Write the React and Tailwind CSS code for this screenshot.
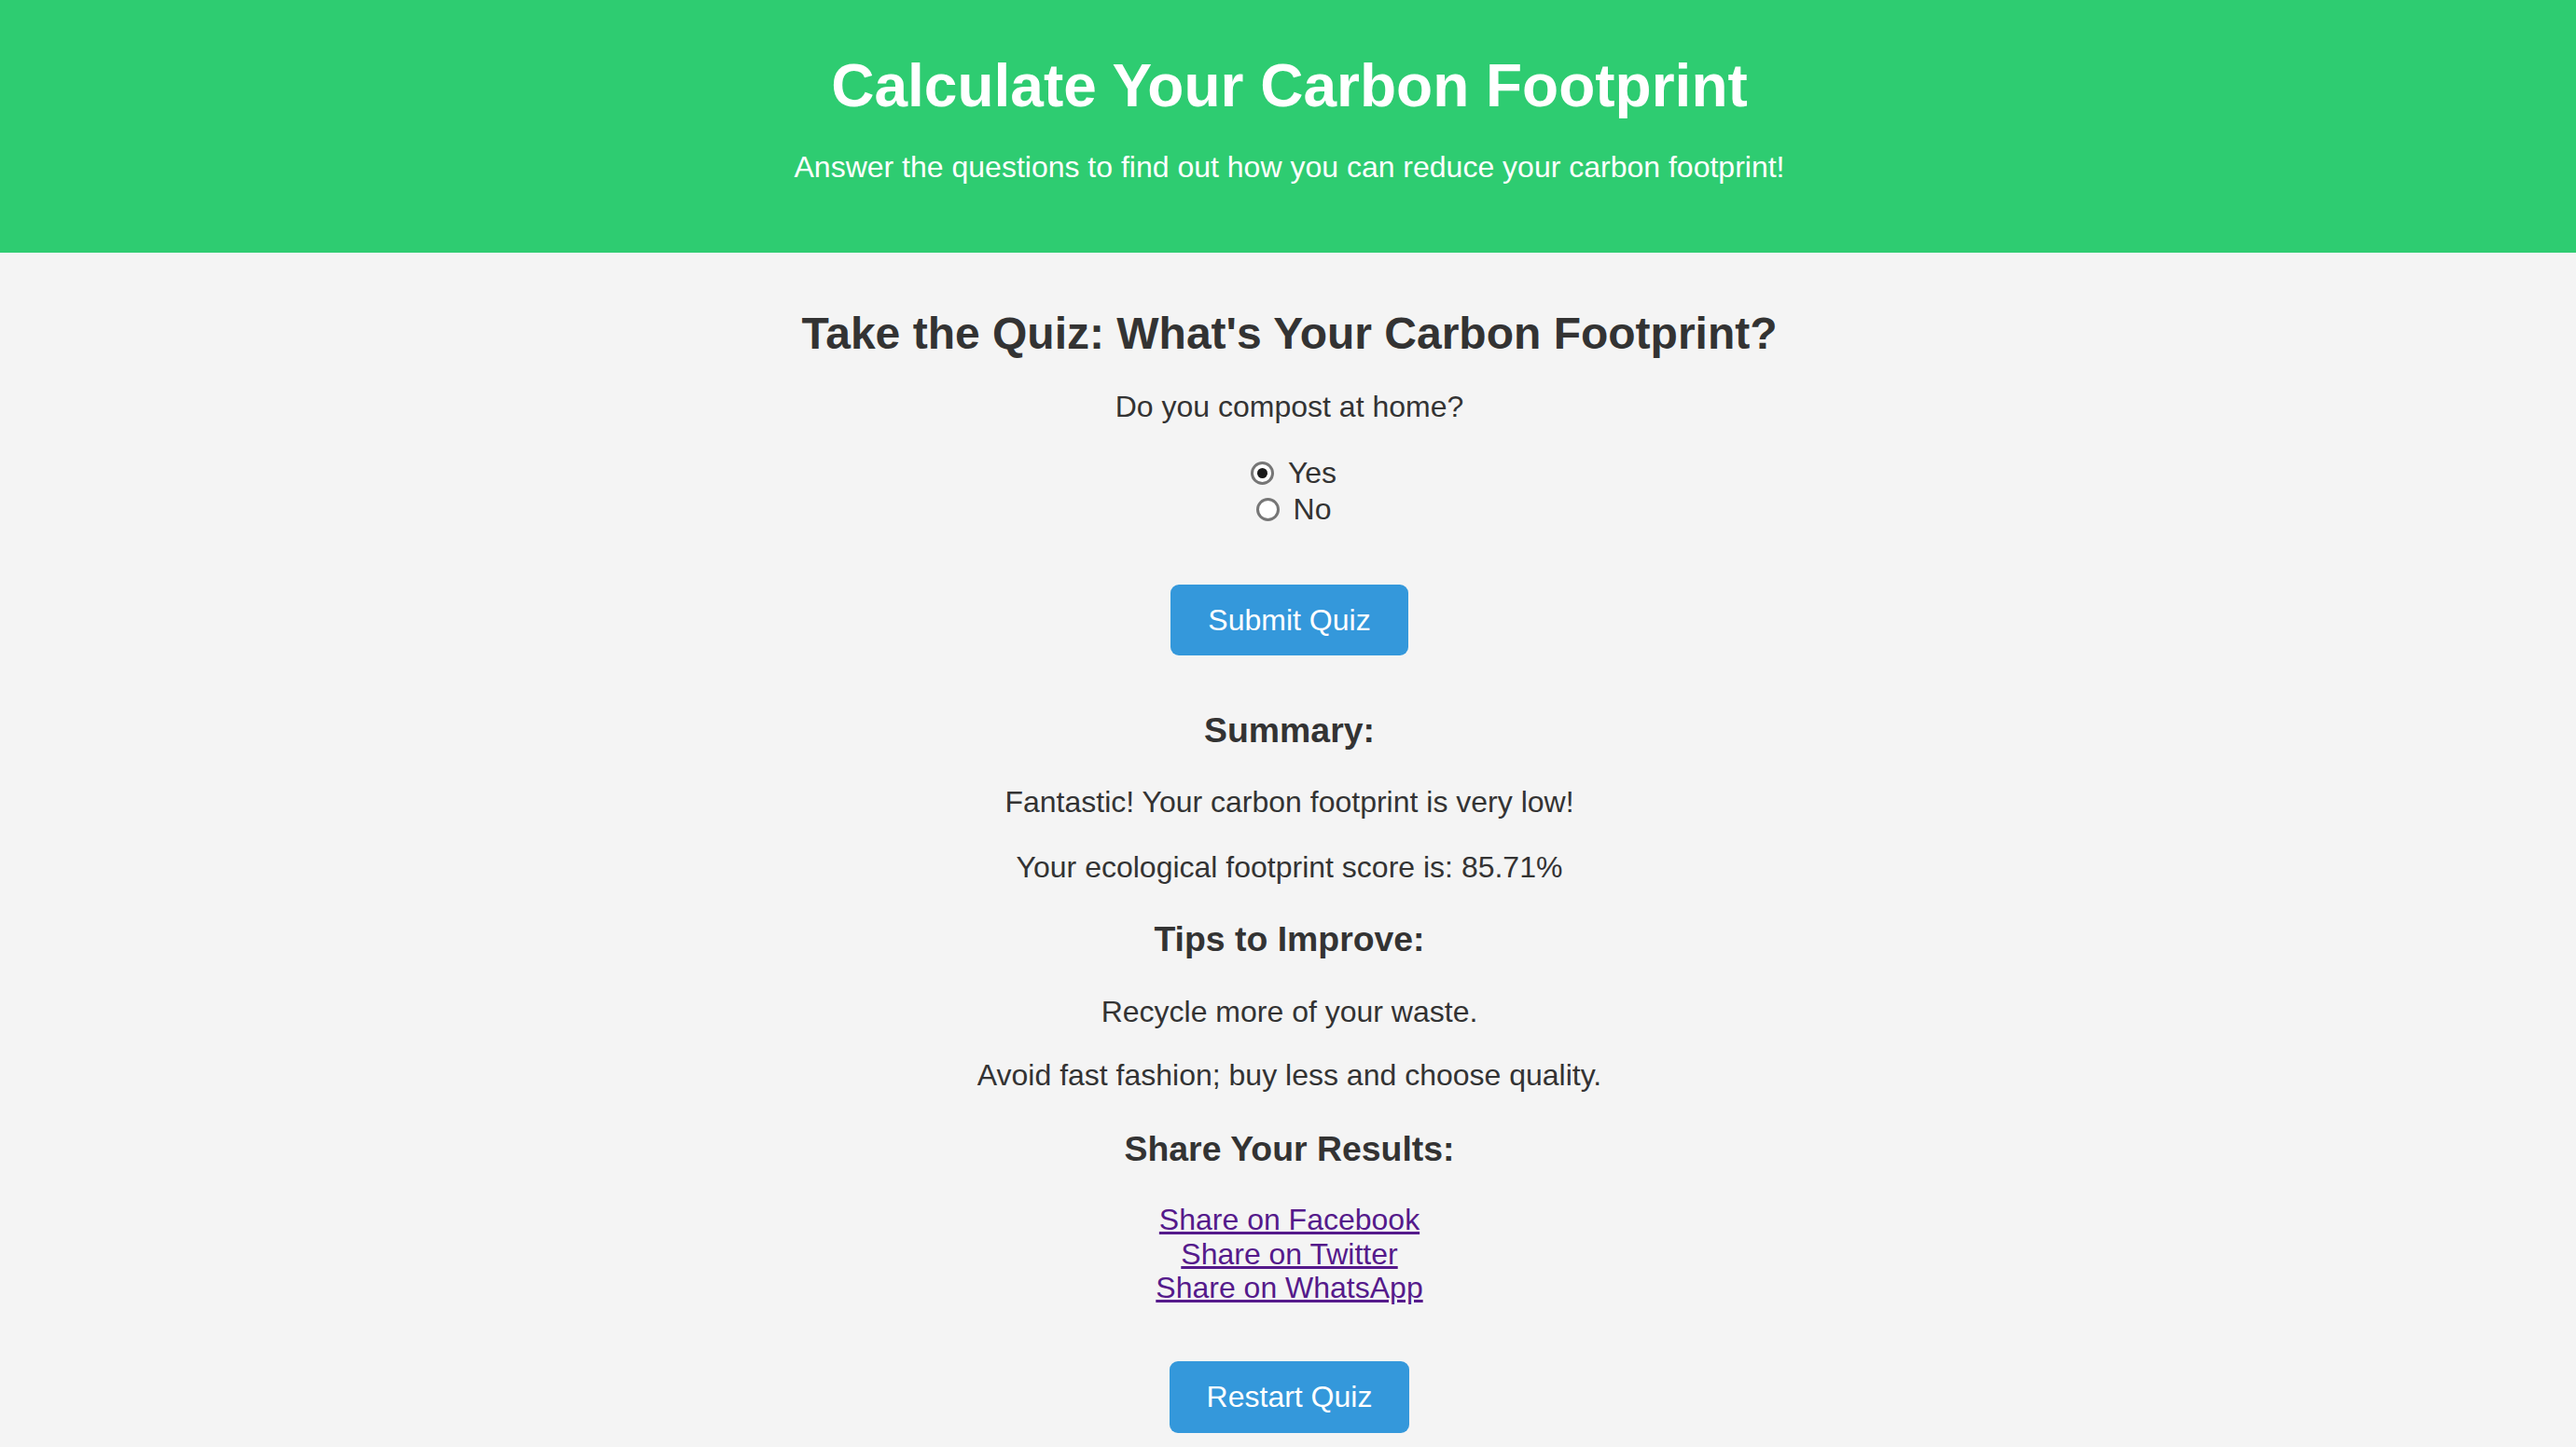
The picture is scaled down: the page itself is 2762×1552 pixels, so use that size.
import React, { useState } from 'react';

const Radio = ({ checked, onSelect, label }) => (
  <label onClick={onSelect} className="flex items-center justify-center h-[39px] leading-[39px] cursor-pointer">
    <span className="ml-[9px] mr-[15px] w-[25px] h-[25px] rounded-full border-[3px] border-[#767676] bg-white flex items-center justify-center">
      {checked && <span className="w-[11px] h-[11px] rounded-full bg-[#1a1a1a]" />}
    </span>
    <span>{label}</span>
  </label>
);

const App = () => {
  const [answer, setAnswer] = useState('yes');

  return (
    <div className="min-h-screen bg-[#f4f4f4] text-[#333] text-[32px] font-['Liberation_Sans',Arial,sans-serif] pb-[60px]">
      {/* Header banner */}
      <header className="h-[271px] bg-[#2ecc71] text-white text-center pt-[56px] pl-[3px]">
        <h1 className="text-[64px] leading-[73px] font-bold">Calculate Your Carbon Footprint</h1>
        <p className="mt-[32px] leading-[36.5px]">
          Answer the questions to find out how you can reduce your carbon footprint!
        </p>
      </header>

      <main className="flex flex-col items-center text-center pl-[3px]">
        <h2 className="mt-[60px] text-[48px] leading-[54.7px] font-bold">
          Take the Quiz: What's Your Carbon Footprint?
        </h2>

        {/* Question */}
        <p className="mt-[32px] leading-[36.5px]">Do you compost at home?</p>
        <div className="mt-[34px] flex flex-col items-center">
          <Radio label="Yes" checked={answer === 'yes'} onSelect={() => setAnswer('yes')} />
          <Radio label="No" checked={answer === 'no'} onSelect={() => setAnswer('no')} />
        </div>

        <button className="mt-[61px] h-[76px] px-[40px] rounded-[9px] bg-[#3498db] text-white leading-[36.5px]">
          Submit Quiz
        </button>

        {/* Results */}
        <h3 className="mt-[59px] text-[37.4px] leading-[42.6px] font-bold">Summary:</h3>
        <p className="mt-[37px] leading-[36.5px]">Fantastic! Your carbon footprint is very low!</p>
        <p className="mt-[34px] leading-[36.5px]">Your ecological footprint score is: 85.71%</p>

        <h3 className="mt-[37px] text-[37.4px] leading-[42.6px] font-bold">Tips to Improve:</h3>
        <p className="mt-[39px] leading-[36.5px]">Recycle more of your waste.</p>
        <p className="mt-[31px] leading-[36.5px]">Avoid fast fashion; buy less and choose quality.</p>

        <h3 className="mt-[40px] text-[37.4px] leading-[42.6px] font-bold">Share Your Results:</h3>
        <div className="mt-[36px] flex flex-col items-center leading-[36.7px] text-[#551a8b]">
          <a href="#" className="underline">Share on Facebook</a>
          <a href="#" className="underline">Share on Twitter</a>
          <a href="#" className="underline">Share on WhatsApp</a>
        </div>

        <button
          onClick={() => setAnswer('yes')}
          className="mt-[60px] h-[77px] px-[40px] rounded-[9px] bg-[#3498db] text-white leading-[36.5px]"
        >
          Restart Quiz
        </button>
      </main>
    </div>
  );
};

export default App;
